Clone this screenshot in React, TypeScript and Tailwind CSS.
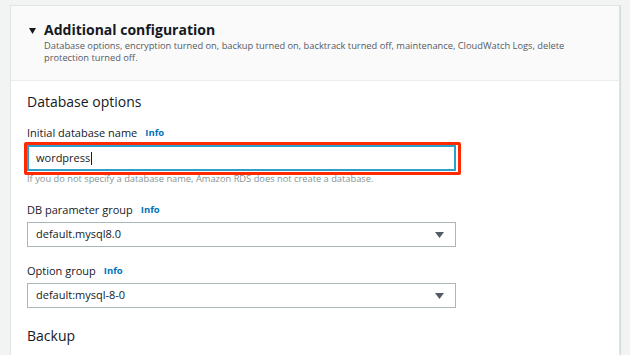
import React from 'react';

const font = { fontFamily: '"Open Sans", "Liberation Sans", sans-serif' };

const Info: React.FC = () => (
  <span className="ml-[8px] text-[9.5px] font-bold text-[#0073bb]">Info</span>
);

const Caret: React.FC = () => (
  <svg width="9" height="6" viewBox="0 0 9 6" className="shrink-0">
    <path d="M0 0 H9 L4.5 6 Z" fill="#545b64" />
  </svg>
);

const SelectBox: React.FC<{ value: string }> = ({ value }) => (
  <div className="flex h-[25px] w-[429px] items-center justify-between border border-[#aab7b8] bg-white pl-[8px] pr-[11px]">
    <span className="text-[11px] text-[#16191f]">{value}</span>
    <Caret />
  </div>
);

export default function App() {
  return (
    <div className="h-[355px] w-[630px] overflow-hidden bg-[#f2f3f3] pl-[10px] pr-[10px] pt-[5px]" style={font}>
      <div className="h-[400px] border-l border-r border-t border-[#e1e4e4] bg-white shadow-[1px_0_0_#d5dbdb]">
        {/* header */}
        <div className="h-[75px] border-b border-[#eaeded] bg-[#fafafa] pl-[18px] pt-[14px]">
          <div className="flex items-center">
            <svg width="7" height="6" viewBox="0 0 7 6" className="mr-[8px] mt-[1px]">
              <path d="M0 0 H7 L3.5 6 Z" fill="#16191f" />
            </svg>
            <h2 className="text-[14px] font-bold leading-[20px] text-[#16191f]">Additional configuration</h2>
          </div>
          <p className="w-[540px] pl-[15px] text-[9.3px] leading-[12px] text-[#545b64]">
            Database options, encryption turned on, backup turned on, backtrack turned off, maintenance, CloudWatch Logs, delete protection turned off.
          </p>
        </div>

        {/* body */}
        <div className="pl-[16px] pt-[11px]">
          <h3 className="text-[14px] leading-[20px] text-[#16191f]">Database options</h3>

          <div className="mt-[14px] flex items-center text-[11px] leading-[14px] text-[#16191f]">
            Initial database name<Info />
          </div>
          <div className="relative mt-[5px] w-[429px]">
            <div className="flex h-[26px] items-center border-2 border-[#2d9fc8] bg-white pl-[7px]">
              <span className="text-[11px] text-[#16191f]">wordpress</span>
              <span className="ml-[1px] h-[13px] w-px bg-[#16191f]" />
            </div>
            <div className="absolute -bottom-[4px] -left-[3px] -right-[5px] -top-[3px] rounded-[2px] border-[3px] border-[#ff2a00]" />
          </div>
          <p className="mt-[2px] text-[9.3px] leading-[11px] text-[#879596]">
            If you do not specify a database name, Amazon RDS does not create a database.
          </p>

          <div className="mt-[19px] flex items-center text-[11px] leading-[14px] text-[#16191f]">
            DB parameter group<Info />
          </div>
          <div className="mt-[5px]">
            <SelectBox value="default.mysql8.0" />
          </div>

          <div className="mt-[17px] flex items-center text-[11px] leading-[14px] text-[#16191f]">
            Option group<Info />
          </div>
          <div className="mt-[5px]">
            <SelectBox value="default:mysql-8-0" />
          </div>

          <h3 className="mt-[18px] text-[14px] leading-[20px] text-[#16191f]">Backup</h3>
        </div>
      </div>
    </div>
  );
}
